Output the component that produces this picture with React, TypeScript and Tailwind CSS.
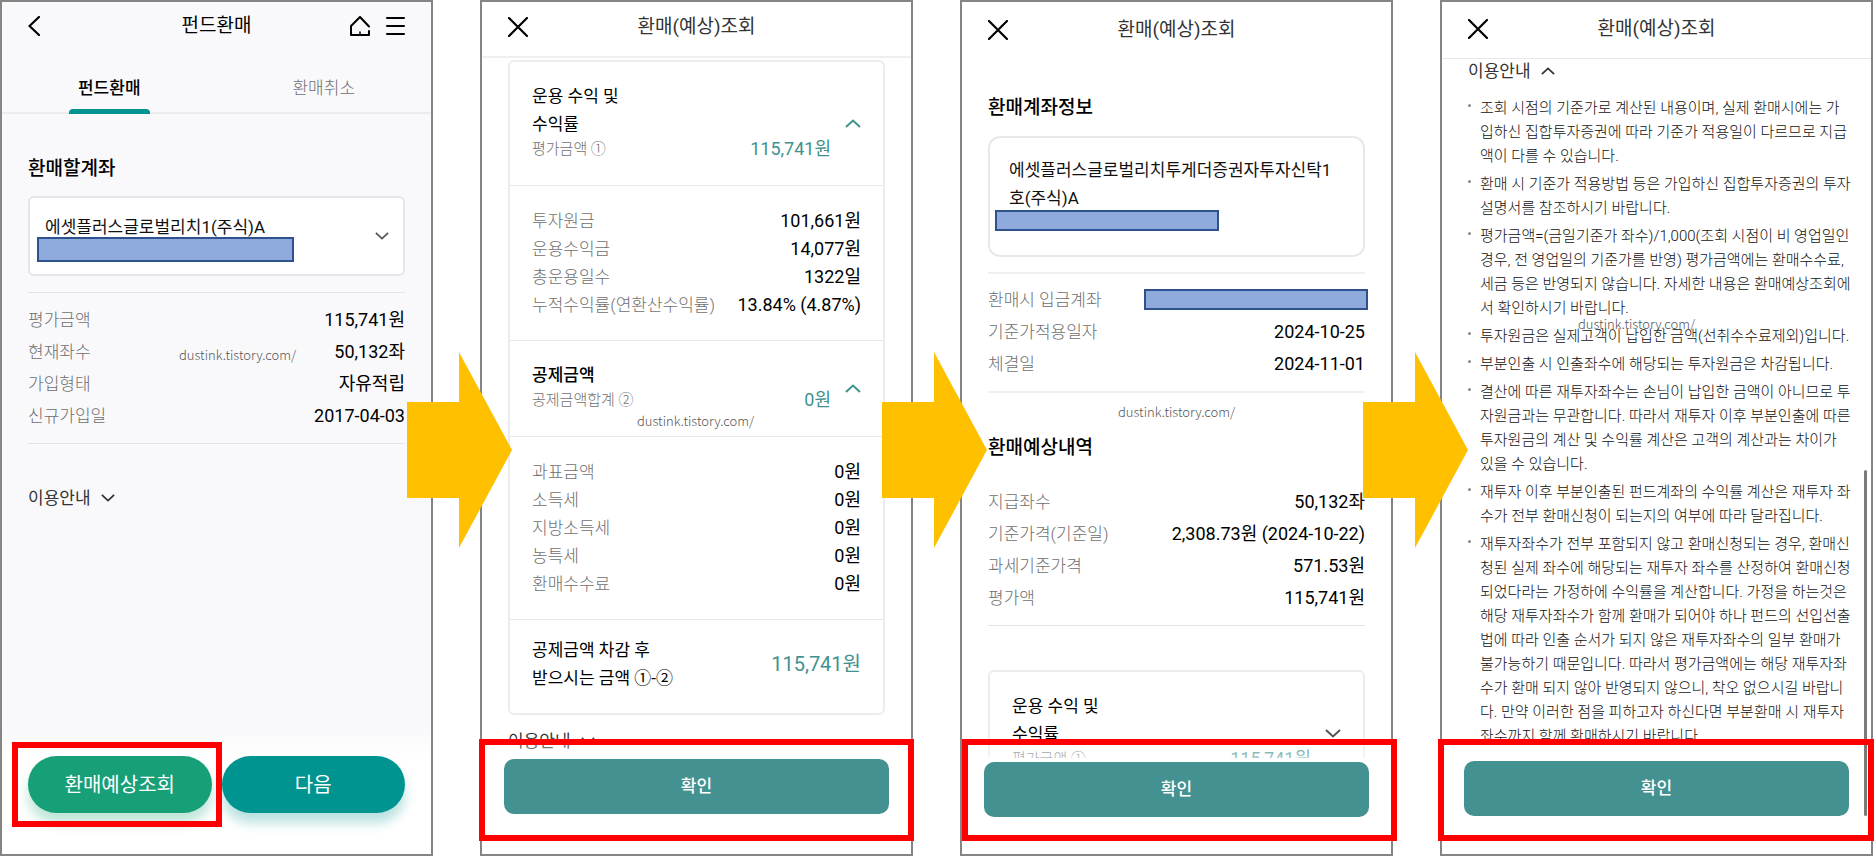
import type { ReactNode } from 'react'
import { clsx } from 'clsx'

interface Row {
  label: string
  value: string
}

const accountRows: Row[] = [
  { label: '평가금액', value: '115,741원' },
  { label: '현재좌수', value: '50,132좌' },
  { label: '가입형태', value: '자유적립' },
  { label: '신규가입일', value: '2017-04-03' },
]

const profitRows: Row[] = [
  { label: '투자원금', value: '101,661원' },
  { label: '운용수익금', value: '14,077원' },
  { label: '총운용일수', value: '1322일' },
  { label: '누적수익률(연환산수익률)', value: '13.84% (4.87%)' },
]

const deductionRows: Row[] = [
  { label: '과표금액', value: '0원' },
  { label: '소득세', value: '0원' },
  { label: '지방소득세', value: '0원' },
  { label: '농특세', value: '0원' },
  { label: '환매수수료', value: '0원' },
]

const scheduleRows: Row[] = [
  { label: '환매시 입금계좌', value: '' },
  { label: '기준가적용일자', value: '2024-10-25' },
  { label: '체결일', value: '2024-11-01' },
]

const estimateRows: Row[] = [
  { label: '지급좌수', value: '50,132좌' },
  { label: '기준가격(기준일)', value: '2,308.73원 (2024-10-22)' },
  { label: '과세기준가격', value: '571.53원' },
  { label: '평가액', value: '115,741원' },
]

const notices = [
  `조회 시점의 기준가로 계산된 내용이며, 실제 환매시에는 가
입하신 집합투자증권에 따라 기준가 적용일이 다르므로 지급
액이 다를 수 있습니다.`,
  `환매 시 기준가 적용방법 등은 가입하신 집합투자증권의 투자
설명서를 참조하시기 바랍니다.`,
  `평가금액=(금일기준가 좌수)/1,000(조회 시점이 비 영업일인
경우, 전 영업일의 기준가를 반영) 평가금액에는 환매수수료,
세금 등은 반영되지 않습니다. 자세한 내용은 환매예상조회에
서 확인하시기 바랍니다.`,
  `투자원금은 실제고객이 납입한 금액(선취수수료제외)입니다.`,
  `부분인출 시 인출좌수에 해당되는 투자원금은 차감됩니다.`,
  `결산에 따른 재투자좌수는 손님이 납입한 금액이 아니므로 투
자원금과는 무관합니다. 따라서 재투자 이후 부분인출에 따른
투자원금의 계산 및 수익률 계산은 고객의 계산과는 차이가
있을 수 있습니다.`,
  `재투자 이후 부분인출된 펀드계좌의 수익률 계산은 재투자 좌
수가 전부 환매신청이 되는지의 여부에 따라 달라집니다.`,
  `재투자좌수가 전부 포함되지 않고 환매신청되는 경우, 환매신
청된 실제 좌수에 해당되는 재투자 좌수를 산정하여 환매신청
되었다라는 가정하에 수익률을 계산합니다. 가정을 하는것은
해당 재투자좌수가 함께 환매가 되어야 하나 펀드의 선입선출
법에 따라 인출 순서가 되지 않은 재투자좌수의 일부 환매가
불가능하기 때문입니다. 따라서 평가금액에는 해당 재투자좌
수가 환매 되지 않아 반영되지 않으니, 착오 없으시길 바랍니
다. 만약 이러한 점을 피하고자 하신다면 부분환매 시 재투자
좌수까지 함께 환매하시기 바랍니다.`,
]

function Chevron({ up, className }: { up?: boolean; className?: string }) {
  return (
    <svg viewBox="0 0 16 9" fill="none" stroke="currentColor" className={clsx('shrink-0', className)} aria-hidden="true">
      <path d={up ? 'M1 8l7-6.5L15 8' : 'M1 1l7 6.5L15 1'} />
    </svg>
  )
}

function Arrow({ className }: { className: string }) {
  return (
    <svg viewBox="0 0 105 196" className={clsx('absolute top-[350px] z-20 w-[105px] h-[196px]', className)} aria-hidden="true">
      <path d="M0 50H52V0L105 98L52 196V146H0Z" fill="#ffc000" />
    </svg>
  )
}

function Watermark({ className }: { className: string }) {
  return (
    <span className={clsx("absolute z-10 font-['Noto_Sans_CJK_KR',sans-serif] text-[13px] leading-5 font-light text-[#555]", className)}>
      dustink.tistory.com/
    </span>
  )
}

// hides an account number
function Redaction({ className }: { className: string }) {
  return <div className={clsx('absolute border-2 border-[#2f528f] bg-[#8faadc]', className)} />
}

function Highlight({ className }: { className: string }) {
  return <div className={clsx('absolute z-10 border-[6px] border-[#ff0000] pointer-events-none', className)} />
}

function Phone({ className, children }: { className?: string; children: ReactNode }) {
  return (
    <section className={clsx('relative flex flex-col min-w-0 min-h-0 border-2 border-[#858585]', className)}>
      {children}
    </section>
  )
}

function SheetHeader({ className }: { className: string }) {
  return (
    <header className={clsx('shrink-0 grid grid-cols-[1fr_auto_1fr] items-center px-[26px]', className)}>
      <button aria-label="닫기" className="justify-self-start">
        <svg viewBox="0 0 20 20" className="w-5 h-5" fill="none" stroke="#000" strokeWidth="2.200" strokeLinecap="round">
          <path d="M1 1l18 18M19 1L1 19" />
        </svg>
      </button>
      <h1 className="text-[19px] leading-7 text-[#333]">환매(예상)조회</h1>
    </header>
  )
}

function Rows({ rows, loose }: { rows: Row[]; loose?: boolean }) {
  return (
    <dl>
      {rows.map(row => (
        <div key={row.label} className={clsx('flex justify-between', loose ? 'h-8 leading-8' : 'h-7 leading-7')}>
          <dt className="text-[17px] font-light text-[#6f6f6f]">{row.label}</dt>
          <dd className="text-lg/[inherit] text-black">{row.value}</dd>
        </div>
      ))}
    </dl>
  )
}

interface SummaryProps {
  title: ReactNode
  label: string
  amount: string
  open?: boolean
}

function Summary({ title, label, amount, open }: SummaryProps) {
  return (
    <div className="flex px-[22px]">
      <div className="flex-1 pt-5 pb-[25px]">
        <h3 className="text-[17px] leading-7 text-black">{title}</h3>
        <p className="text-[15px] leading-[22px] font-light text-[#6f6f6f]">{label}</p>
      </div>
      <span className="self-end pb-6 text-lg/6 text-[#3f9290]">{amount}</span>
      <button aria-label={open ? '접기' : '펼치기'} className="self-center ml-[14px]">
        <Chevron up={open} className={clsx('w-4 h-[9px] stroke-2', open ? 'text-[#3f9290]' : 'text-[#555]')} />
      </button>
    </div>
  )
}

function ConfirmFooter({ className }: { className: string }) {
  return (
    <footer className={clsx('relative shrink-0 -mt-5 px-[22px] bg-[linear-gradient(transparent,#fff_40px)]', className)}>
      <button className="w-full h-[55px] rounded-[10px] bg-[#439190] text-[17px] font-medium text-white">확인</button>
    </footer>
  )
}

function FundScreen() {
  return (
    <Phone className="bg-[#f9f9fb]">
      <header className="shrink-0 h-12 grid grid-cols-[1fr_auto_1fr] items-center px-[26px]">
        <button aria-label="뒤로" className="justify-self-start">
          <svg viewBox="0 0 12 20" className="w-3 h-5" fill="none" stroke="#000" strokeWidth="2.200" strokeLinecap="round">
            <path d="M11 1L1.500 10L11 19" />
          </svg>
        </button>
        <h1 className="text-[19px] leading-7 text-black">펀드환매</h1>
        <div className="flex justify-self-end gap-4">
          <button aria-label="홈">
            <svg viewBox="0 0 20 20" className="w-5 h-5" fill="none" stroke="#000" strokeWidth="2" strokeLinecap="round" strokeLinejoin="round">
              <path d="M19 10.500L10 1L1 10V19H19V15" />
              <path d="M10 16v3" strokeWidth="1.500" />
            </svg>
          </button>
          <button aria-label="메뉴">
            <svg viewBox="0 0 19 20" className="w-[19px] h-5" fill="none" stroke="#000" strokeWidth="2" strokeLinecap="round">
              <path d="M1 2h17M1 10h17M1 18h17" />
            </svg>
          </button>
        </div>
      </header>

      <nav className="shrink-0 h-16 grid grid-cols-2 border-b-2 border-[#ececee] text-[17px]">
        <button className="relative justify-self-center px-[9px] pt-4 font-medium text-black">
          펀드환매
          <span className="absolute inset-x-0 -bottom-0.5 h-[5px] rounded-t bg-[#009490]" />
        </button>
        <button className="justify-self-center px-[9px] pt-4 font-light text-[#6f6f6f]">환매취소</button>
      </nav>

      <main className="flex-1 min-h-0 overflow-hidden px-[26px] pt-[41px]">
        <h2 className="text-[19px] leading-7 font-medium text-black">
          <label htmlFor="account">환매할계좌</label>
        </h2>
        <div className="relative mt-[13px]">
          <select
            id="account"
            className="block w-full h-20 appearance-none rounded-md border-2 border-[#e6e6ea] bg-white pl-[15px] pb-4 text-[17px] text-[#111]"
          >
            <option>에셋플러스글로벌리치1(주식)A</option>
          </select>
          <Redaction className="left-[9px] top-[41px] w-[257px] h-[25px]" />
          <Chevron className="absolute right-4 top-[36px] w-[14px] h-2 stroke-2 text-[#555]" />
        </div>
        <div className="mt-4 py-[11px] border-y border-[#e4e4e8]">
          <Rows rows={accountRows} loose />
        </div>
        <button className="mt-10 flex items-center gap-2.5 text-[17px] leading-7 text-[#333]">
          이용안내
          <Chevron className="w-[14px] h-2 stroke-2" />
        </button>
      </main>

      <footer className="shrink-0 pt-[26px] pb-[41px] px-[26px] grid grid-cols-2 gap-2.5 bg-[linear-gradient(#f9f9fb,#fff_30px)] text-xl text-white">
        <div className="relative">
          <button className="w-full h-[57px] rounded-full bg-[#17a077] shadow-[0_10px_12px_rgba(23,160,119,0.28)]">환매예상조회</button>
          <Highlight className="-left-4 -right-2.5 -top-3.5 -bottom-3.5" />
        </div>
        <button className="h-[57px] rounded-full bg-[#009490] shadow-[0_10px_12px_rgba(0,148,144,0.28)]">다음</button>
      </footer>

      <Watermark className="left-[177px] top-[343px]" />
      <Arrow className="-right-[81px]" />
    </Phone>
  )
}

function ResultScreen() {
  return (
    <Phone>
      <SheetHeader className="h-14 pb-1 border-b-2 border-[#efeff0]" />
      <main className="flex-1 min-h-0 overflow-hidden px-[26px] pt-0.5">
        <div className="rounded-md border-2 border-[#ececef] divide-y divide-[#e8e8ec]">
          <Summary
            title={<>운용 수익 및<br />수익률</>}
            label="평가금액 ①"
            amount="115,741원"
            open
          />
          <div className="px-[22px] py-[21px]">
            <Rows rows={profitRows} />
          </div>
          <Summary title={<span className="font-medium">공제금액</span>} label="공제금액합계 ②" amount="0원" open />
          <div className="px-[22px] py-[21px]">
            <Rows rows={deductionRows} />
          </div>
          <div className="flex items-center justify-between px-[22px] pt-4 pb-[21px]">
            <p className="text-[17px] leading-7 text-black">
              공제금액 차감 후<br />받으시는 금액 ①-②
            </p>
            <strong className="text-xl/7 font-normal text-[#3f9290]">115,741원</strong>
          </div>
        </div>
        <button className="mt-3 flex items-center gap-2.5 text-[17px] leading-7 text-[#333]">
          이용안내
          <Chevron className="w-[14px] h-2 stroke-2" />
        </button>
      </main>
      <ConfirmFooter className="pt-6 pb-10" />
      <Highlight className="-inset-x-[3px] bottom-[13px] h-[102px]" />
      <Watermark className="left-[155px] top-[409px]" />
      <Arrow className="-right-[76px]" />
    </Phone>
  )
}

function AccountInfoScreen() {
  return (
    <Phone>
      <SheetHeader className="h-14" />
      <main className="flex-1 min-h-0 overflow-hidden px-[26px] pt-9">
        <h2 className="text-[19px] leading-7 font-medium text-black">환매계좌정보</h2>
        <div className="relative mt-3.5 h-[121px] rounded-xl border-2 border-[#e8e8ec] px-[19px] pt-[18px]">
          <p className="text-[17px] leading-7 text-[#111] whitespace-nowrap">
            에셋플러스글로벌리치투게더증권자투자신탁1<br />호(주식)A
          </p>
          <Redaction className="left-[5px] top-[72px] w-[224px] h-[21px]" />
        </div>
        <div className="relative mt-[15px] pt-2.5 pb-[11px] border-y-2 border-[#f0f0f2]">
          <Rows rows={scheduleRows} loose />
          <Redaction className="-right-[3px] top-[15px] w-[224px] h-[21px]" />
        </div>
        <h2 className="mt-[41px] text-[19px] leading-7 font-medium text-black">환매예상내역</h2>
        <div className="mt-6 pb-[11px] border-b border-[#e4e4e8]">
          <Rows rows={estimateRows} loose />
        </div>
        <div className="mt-11 rounded-md border-2 border-[#ececef]">
          <Summary
            title={<>운용 수익 및<br />수익률</>}
            label="평가금액 ①"
            amount="115,741원"
          />
        </div>
      </main>
      <ConfirmFooter className="pt-6 pb-[37px]" />
      <Highlight className="left-0 -right-[6px] bottom-[13px] h-[102px]" />
      <Watermark className="left-[156px] top-[400px]" />
      <Arrow className="-right-[77px]" />
    </Phone>
  )
}

function NoticeScreen() {
  return (
    <Phone>
      <SheetHeader className="h-[57px] pb-0.5 border-b border-[#e8e8ea]" />
      <main className="flex-1 min-h-0 overflow-hidden px-[26px]">
        <button className="flex items-center gap-2.5 text-[17px] leading-6 text-[#333]">
          이용안내
          <Chevron up className="w-[14px] h-2 stroke-2" />
        </button>
        <ul className="mt-[13px] flex flex-col gap-1 text-[15px] leading-6 font-light text-[#111]">
          {notices.map(notice => (
            <li key={notice} className="flex gap-[9px] whitespace-pre">
              <span className="shrink-0 mt-2 w-[3px] h-[3px] rounded-full bg-[#888]" />
              {notice}
            </li>
          ))}
        </ul>
      </main>
      <ConfirmFooter className="pt-6 pb-[38px]" />
      <div className="absolute right-1 bottom-[38px] w-[3px] h-[346px] rounded-full bg-[#7a7a7a]" />
      <Highlight className="-left-1 -right-[3px] bottom-[13px] h-[102px]" />
      <Watermark className="left-[136px] top-[312px]" />
    </Phone>
  )
}

export default function App() {
  return (
    <div className="grid grid-cols-4 grid-rows-1 gap-[47px] h-screen overflow-hidden pr-px bg-white font-[Roboto,'Noto_Sans_CJK_KR',sans-serif]">
      <FundScreen />
      <ResultScreen />
      <AccountInfoScreen />
      <NoticeScreen />
    </div>
  )
}
